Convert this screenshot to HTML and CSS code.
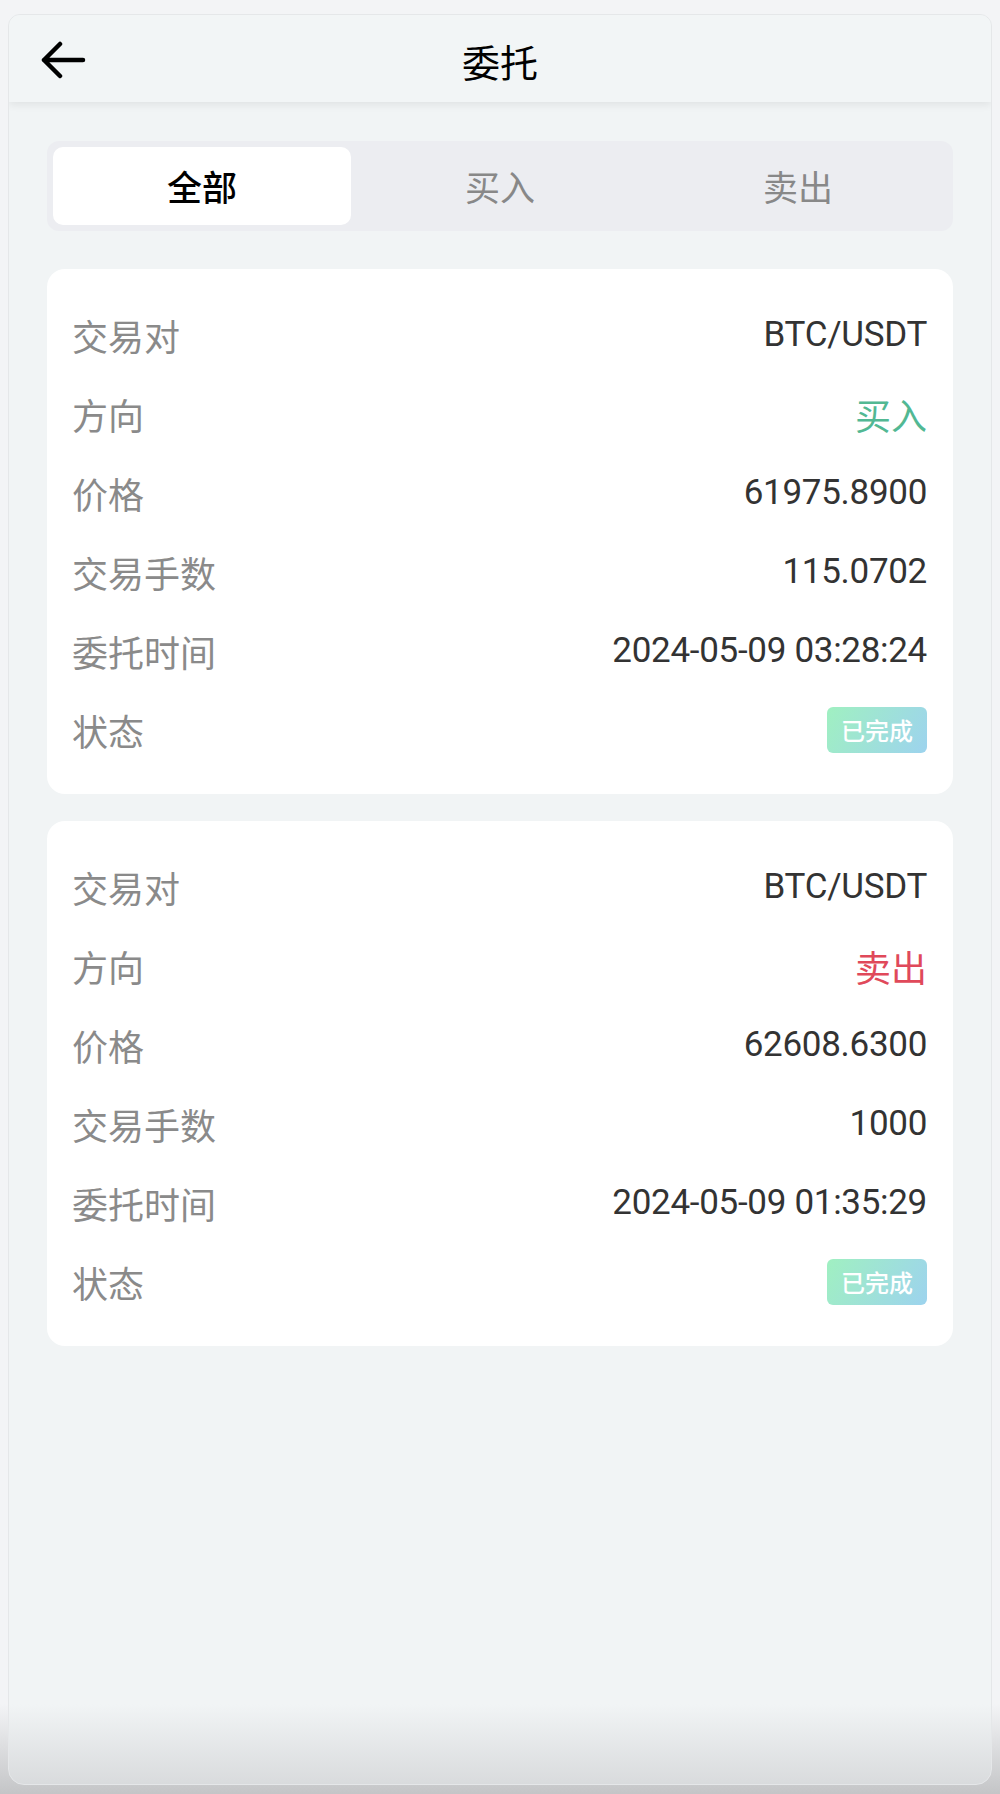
FILE: index.html
```html
<!DOCTYPE html>
<html lang="zh-CN">
<head>
    <meta charset="UTF-8">
    <meta name="viewport" content="width=device-width, initial-scale=1.0">
    <title>委托</title>
    <link rel="stylesheet" href="styles.css">
</head>
<body>
    <div class="window">
        <div class="header">
            <a class="back" href="#">
                <svg width="46" height="42" viewBox="0 0 46 42">
                    <path d="M3 19 H42 M19 3 L3 19 L19 35" fill="none" stroke="#000" stroke-width="4.5" stroke-linecap="round" stroke-linejoin="round"/>
                </svg>
            </a>
            <h1>委托</h1>
            <span></span>
        </div>

        <div class="content">
            <div class="tabs">
                <div class="tab active">全部</div>
                <div class="tab">买入</div>
                <div class="tab">卖出</div>
            </div>

            <div class="card">
                <div class="row"><span class="label">交易对</span><span class="value">BTC/USDT</span></div>
                <div class="row"><span class="label">方向</span><span class="value buy">买入</span></div>
                <div class="row"><span class="label">价格</span><span class="value">61975.8900</span></div>
                <div class="row"><span class="label">交易手数</span><span class="value">115.0702</span></div>
                <div class="row"><span class="label">委托时间</span><span class="value">2024-05-09 03:28:24</span></div>
                <div class="row"><span class="label">状态</span><span class="badge">已完成</span></div>
            </div>

            <div class="card">
                <div class="row"><span class="label">交易对</span><span class="value">BTC/USDT</span></div>
                <div class="row"><span class="label">方向</span><span class="value sell">卖出</span></div>
                <div class="row"><span class="label">价格</span><span class="value">62608.6300</span></div>
                <div class="row"><span class="label">交易手数</span><span class="value">1000</span></div>
                <div class="row"><span class="label">委托时间</span><span class="value">2024-05-09 01:35:29</span></div>
                <div class="row"><span class="label">状态</span><span class="badge">已完成</span></div>
            </div>
        </div>
    </div>
</body>
</html>
```

FILE: styles.css
```css
html, body { height: 100%; }
body {
    margin: 0;
    padding: 14px 8px 9px;
    box-sizing: border-box;
    height: 1794px;
    font-family: Roboto, "Noto Sans CJK SC", sans-serif;
    background: linear-gradient(to bottom, #f3f4f6 95%, #c4c5c7 100%);
}
.window {
    height: 100%;
    box-sizing: border-box;
    border: 1px solid #e5e7e9;
    border-radius: 12px 12px 16px 16px;
    overflow: hidden;
    background: linear-gradient(to bottom, #f1f4f5 95.5%, #d9dbdd 100%);
}

.header {
    height: 87px;
    display: grid;
    grid-template-columns: 1fr auto 1fr;
    align-items: center;
    padding: 0 32px;
    background: #f2f5f6;
    box-shadow: 0 3px 8px rgba(0, 0, 0, 0.07);
    position: relative;
}
.back { display: flex; align-items: center; padding-top: 7px; }
.header h1 {
    margin: 0;
    padding-top: 4px;
    font-size: 38px;
    font-weight: 400;
    color: #000;
    font-family: "Noto Sans CJK SC", sans-serif;
}

.content { padding: 39px 38px 0; }

.tabs {
    display: grid;
    grid-template-columns: repeat(3, 1fr);
    padding: 6px;
    background: #ecedf1;
    border-radius: 12px;
}
.tab {
    height: 78px;
    line-height: 78px;
    text-align: center;
    font-size: 35px;
    color: #888;
    border-radius: 10px;
    font-family: "Noto Sans CJK SC", sans-serif;
}
.tab.active {
    background: #fff;
    color: #000;
    font-weight: 500;
}

.card {
    background: #fff;
    border-radius: 18px;
    padding: 26px 26px 25px 25px;
    margin-top: 38px;
}
.card + .card { margin-top: 27px; }

.row {
    height: 79px;
    display: flex;
    justify-content: space-between;
    align-items: center;
}
.label {
    font-size: 36px;
    color: #8a8a8a;
    font-family: "Noto Sans CJK SC", sans-serif;
}
.value {
    font-size: 35px;
    color: #333;
    letter-spacing: -0.3px;
}
.value.buy { color: #52b893; font-family: "Noto Sans CJK SC", sans-serif; font-size: 36px; letter-spacing: 0; }
.value.sell { color: #e0495a; font-family: "Noto Sans CJK SC", sans-serif; font-size: 36px; letter-spacing: 0; }

.badge {
    width: 100px;
    height: 46px;
    line-height: 46px;
    text-align: center;
    border-radius: 6px;
    color: #fff;
    font-size: 24px;
    font-weight: 500;
    font-family: "Noto Sans CJK SC", sans-serif;
    background: linear-gradient(120deg, #a0f0c1, #9dd3ee);
}
```
